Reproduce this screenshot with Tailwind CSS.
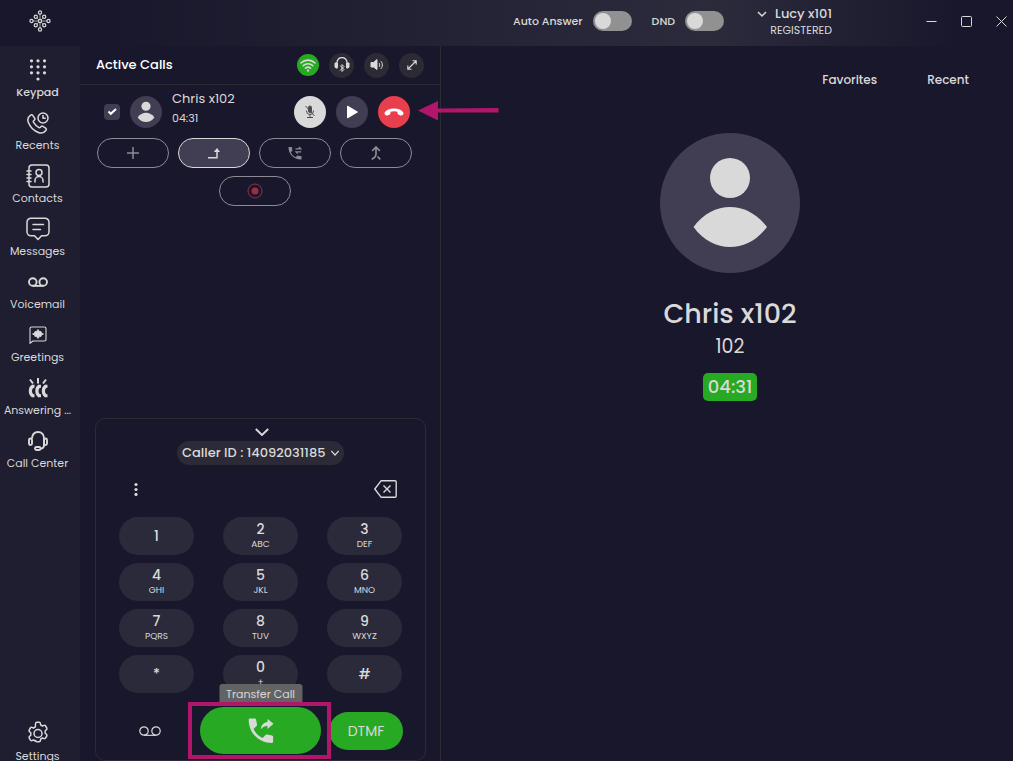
<!DOCTYPE html>
<html lang="en">
<head>
    <meta charset="UTF-8">
    <meta name="viewport" content="width=device-width, initial-scale=1.0">
    <title>Active Calls</title>
    <script src="https://cdn.jsdelivr.net/npm/@tailwindcss/browser@4"></script>
</head>
<body class="h-screen overflow-hidden flex flex-col bg-[#19172b] text-[#d9d9d9] font-['Poppins','Inter',sans-serif]">
    <!-- Title bar -->
    <header class="flex items-center h-[46px] shrink-0 pl-[29px] pr-1.5 pb-1 bg-linear-to-r from-[#19172b] from-10% via-[#2c2b3c] via-70% to-[#19172b] to-95%">
        <svg class="size-[22px]" viewBox="0 0 22 22" fill="none" stroke="currentColor">
            <path stroke-width=".7" d="M11 3v16M3 11h16M7 7l8 8M15 7l-8 8"/>
            <g fill="#19172b" stroke-width="1.2">
                <circle cx="11" cy="2.5" r="1.6"/><circle cx="6.8" cy="6.8" r="1.6"/><circle cx="15.2" cy="6.8" r="1.6"/>
                <circle cx="2.5" cy="11" r="1.6"/><circle cx="11" cy="11" r="1.6"/><circle cx="19.5" cy="11" r="1.6"/>
                <circle cx="6.8" cy="15.2" r="1.6"/><circle cx="15.2" cy="15.2" r="1.6"/><circle cx="11" cy="19.5" r="1.6"/>
            </g>
        </svg>
        <div class="flex items-center ml-auto">
            <label for="auto-answer" class="text-[11px] font-medium mr-2.5">Auto Answer</label>
            <input id="auto-answer" type="checkbox" class="appearance-none w-[39px] h-5 rounded-full bg-[#919191] p-0.5 before:block before:size-4 before:rounded-full before:bg-[#d9d9d9] checked:before:ml-[19px]">
            <label for="dnd" class="text-[11px] font-medium ml-5 mr-2.5">DND</label>
            <input id="dnd" type="checkbox" class="appearance-none w-[39px] h-5 rounded-full bg-[#919191] p-0.5 before:block before:size-4 before:rounded-full before:bg-[#d9d9d9] checked:before:ml-[19px]">
            <button type="button" class="flex flex-col items-end ml-[33px] pt-0.5">
                <span class="flex items-center text-[13px] leading-4 font-medium">
                    <svg class="size-2.5 mr-2" viewBox="0 0 10 10" fill="none" stroke="currentColor" stroke-width="1.5"><path d="M1 3l4 4 4-4"/></svg>
                    Lucy x101
                </span>
                <span class="text-[11px] leading-4">REGISTERED</span>
            </button>
            <div class="flex items-center gap-6 ml-[94px]">
                <button type="button" aria-label="Minimize"><svg class="size-[11px]" viewBox="0 0 11 11" fill="none" stroke="currentColor"><path d="M.5 5.5h10"/></svg></button>
                <button type="button" aria-label="Maximize"><svg class="size-[11px]" viewBox="0 0 11 11" fill="none" stroke="currentColor"><rect x=".5" y=".5" width="10" height="10" rx="1"/></svg></button>
                <button type="button" aria-label="Close"><svg class="size-[11px]" viewBox="0 0 11 11" fill="none" stroke="currentColor"><path d="M.5.5l10 10M10.5.5l-10 10"/></svg></button>
            </div>
        </div>
    </header>

    <div class="flex flex-1 min-h-0">
        <!-- Sidebar -->
        <nav class="flex flex-col gap-[7px] w-20 shrink-0 pt-[9px] pr-[5px] bg-[#1f1d30] text-[11px] leading-[18px] text-center">
            <a href="#keypad" class="flex flex-col items-center font-medium">
                <span class="flex items-center h-7 pt-0.5"><svg class="size-[22px]" viewBox="0 0 22 22" fill="currentColor">
                    <circle cx="4.5" cy="1.8" r="1.6"/><circle cx="11" cy="1.8" r="1.6"/><circle cx="17.5" cy="1.8" r="1.6"/>
                    <circle cx="4.5" cy="7.8" r="1.6"/><circle cx="11" cy="7.8" r="1.6"/><circle cx="17.5" cy="7.8" r="1.6"/>
                    <circle cx="4.5" cy="13.8" r="1.6"/><circle cx="11" cy="13.8" r="1.6"/><circle cx="17.5" cy="13.8" r="1.6"/>
                    <circle cx="11" cy="20" r="1.6"/></svg></span>
                Keypad
            </a>
            <a href="#recents" class="flex flex-col items-center">
                <span class="flex items-center h-7 pt-0.5"><svg class="size-[22px]" viewBox="0 0 22 22" fill="none" stroke="currentColor" stroke-width="1.5" stroke-linejoin="round">
                    <path d="M3.6 3.2C4.2 2.6 5.200 2.700 5.700 3.400L7.700 6.200C8.100 6.800 8 7.500 7.500 8L6.500 9C6.200 9.300 6.200 9.700 6.400 10.100 7.700 12.300 9.700 14.300 12 15.600 12.400 15.800 12.800 15.800 13.100 15.500L14.100 14.500C14.600 14 15.300 13.900 15.900 14.300L18.700 16.200C19.400 16.700 19.500 17.600 19 18.200 17.200 20.800 14.800 21.700 12 20.700 7 19 3 15 1.200 10 .2 7.200 1.200 4.900 3.600 3.200Z"/>
                    <circle cx="16" cy="6" r="5"/><path d="M16 3V6.300H18.800"/></svg></span>
                Recents
            </a>
            <a href="#contacts" class="flex flex-col items-center">
                <span class="flex items-center h-7 pt-0.5"><svg class="size-6" viewBox="0 0 24 24" fill="none" stroke="currentColor" stroke-width="1.5" stroke-linecap="round">
                    <rect x="3" y="1" width="20" height="22" rx="3"/><path d="M1 7h4M1 10.500h4M1 14h4M1 17.500h4"/>
                    <circle cx="13" cy="8.500" r="3"/><path d="M9 18v-1.500a4 4 0 0 1 8 0V18"/></svg></span>
                Contacts
            </a>
            <a href="#messages" class="flex flex-col items-center">
                <span class="flex items-center h-7 pt-0.5"><svg class="size-6" viewBox="0 0 24 24" fill="none" stroke="currentColor" stroke-width="1.5" stroke-linejoin="round" stroke-linecap="round">
                    <path d="M5 1.200h14a4 4 0 0 1 4 4v9.600a4 4 0 0 1-4 4h-3.500L12 22.500 8.500 18.800H5a4 4 0 0 1-4-4V5.200a4 4 0 0 1 4-4ZM7 7.500h10.500M7 12.500h7.500"/></svg></span>
                Messages
            </a>
            <a href="#voicemail" class="flex flex-col items-center">
                <span class="flex items-center h-7 pt-0.5"><svg class="w-5 h-2.5" viewBox="0 0 20 10" fill="none" stroke="currentColor" stroke-width="1.9"><circle cx="4.800" cy="5" r="3.800"/><circle cx="15.200" cy="5" r="3.800"/><path d="M4.800 8.900h10.400"/></svg></span>
                Voicemail
            </a>
            <a href="#greetings" class="flex flex-col items-center">
                <span class="flex items-center h-7 pt-0.5"><svg class="size-[18px]" viewBox="0 0 18 18" fill="none" stroke="currentColor" stroke-width="1.1" stroke-linejoin="round">
                    <path d="M2.500 1h13A1.500 1.500 0 0 1 17 2.500v11a1.500 1.500 0 0 1-1.500 1.500H4L1 17.300V2.500A1.500 1.500 0 0 1 2.500 1Z"/>
                    <path fill="currentColor" stroke-width=".8" d="M3.500 8L5.500 7 6 5.500 7.500 5.500 9 3.500 10.500 5.500 12 5.500 12.500 7 14.500 8 12.500 9 12 10.500 10.500 10.500 9 12.500 7.500 10.500 6 10.500 5.500 9Z"/></svg></span>
                Greetings
            </a>
            <a href="#answering" class="flex flex-col items-center whitespace-nowrap">
                <span class="flex items-center h-7 pt-0.5"><svg class="size-5" viewBox="0 0 20 20" fill="none" stroke="currentColor" stroke-width="2">
                    <path d="M2 1.500l3 4M10 0V5.500M18 1.500l-3 4"/>
                    <path stroke-width="3.200" d="M5 8C1.500 10 1.500 16 5 18.200M11.500 8C8 10 8 16 11.500 18.200M18 8C14.500 10 14.500 16 18 18.200"/>
                    <path stroke-width="3" d="M4 8.300h2.500M4 17.700h2.500M10.500 8.300H13M10.500 17.700H13M17 8.300h2.500M17 17.700h2.500"/></svg></span>
                Answering ...
            </a>
            <a href="#call-center" class="flex flex-col items-center">
                <span class="flex items-center h-7 pt-0.5"><svg class="size-5" viewBox="0 0 20 20" fill="none" stroke="currentColor" stroke-width="1.9">
                    <path d="M4 7.500C4 3.500 6.500 1 10 1s6 2.500 6 6.500V14c0 2-1 3.500-3.500 3.800"/><rect x="1" y="7.500" width="3" height="6.500" rx="1.500"/><rect x="16" y="7.500" width="3" height="6.500" rx="1.500"/><rect x="7" y="16" width="5.500" height="3" rx="1.500"/></svg></span>
                Call Center
            </a>
            <a href="#settings" class="flex flex-col items-center mt-auto -mb-1">
                <span class="flex items-center h-7"><svg class="size-6" viewBox="0 0 24 24" fill="none" stroke="currentColor" stroke-width="1.5" stroke-linejoin="round">
                    <path d="M9.600 2.400C9.700 1.700 10.200 1.300 10.800 1.300h2.400c.6 0 1.100.4 1.200 1.100l.3 1.600 1.800 1 1.600-.6c.6-.2 1.200 0 1.500.6l1.200 2c.3.600.2 1.200-.3 1.600l-1.300 1.100v2.600l1.300 1.100c.5.400.6 1 .3 1.600l-1.200 2c-.3.600-.9.800-1.500.6l-1.600-.6-1.800 1-.3 1.600c-.1.700-.6 1.100-1.200 1.100h-2.400c-.6 0-1.100-.4-1.200-1.100L9.300 20l-1.800-1-1.600.6c-.6.2-1.200 0-1.500-.6l-1.200-2c-.3-.6-.2-1.200.3-1.600l1.300-1.100v-2.600L3.500 10.600c-.5-.4-.6-1-.3-1.600l1.200-2c.3-.6.900-.8 1.500-.6l1.600.6 1.800-1z"/><circle cx="12" cy="12.500" r="4"/></svg></span>
                Settings
            </a>
        </nav>

        <!-- Calls panel -->
        <section class="flex flex-col w-[361px] shrink-0 border-r border-[#2c2b35]">
            <div class="flex items-center gap-2.5 h-[39px] shrink-0 pl-4 pr-4 border-b border-[#2c2b35]">
                <h1 class="text-[13px] font-medium text-white mr-auto">Active Calls</h1>
                <button type="button" aria-label="Connection" class="flex items-center justify-center size-[22px] rounded-full bg-[#28a923]">
                    <svg class="w-4 h-3.5" viewBox="0 0 16 14" fill="none" stroke="currentColor" stroke-width="1.6" stroke-linecap="round"><path d="M1 5a10 10 0 0 1 14 0M3.200 7.700a7 7 0 0 1 9.600 0M5.500 10.200a3.800 3.800 0 0 1 5 0"/><circle cx="8" cy="12.500" r=".4"/></svg>
                </button>
                <button type="button" aria-label="Headset" class="flex items-center justify-center size-[25px] rounded-full bg-[#2c2b35]">
                    <svg class="size-4" viewBox="0 0 16 16" fill="none" stroke="currentColor"><path stroke-width="1.3" d="M3 7V5.500a5 5 0 0 1 10 0V7"/><path fill="currentColor" d="M1 6h2.500v5H1.800L1 10zM15 6h-2.500v5h1.700l.8-1z"/><path d="M6 8.500l4 4-2 2v-7l2 2-4 4"/></svg>
                </button>
                <button type="button" aria-label="Speaker" class="flex items-center justify-center size-[25px] rounded-full bg-[#2c2b35]">
                    <svg class="size-3.5" viewBox="0 0 14 14" fill="none" stroke="currentColor"><path fill="currentColor" d="M1 4.500h2.500L7 1.500v10L3.500 9H1z"/><path d="M9 5c1 1 1 3 0 4M10.500 3c2.500 2 2.500 6 0 8"/></svg>
                </button>
                <button type="button" aria-label="Expand" class="flex items-center justify-center size-[25px] rounded-full bg-[#2c2b35]">
                    <svg class="size-2.5" viewBox="0 0 10 10" fill="none" stroke="currentColor" stroke-width="1.1"><path d="M1 9l8-8M5.500.8h3.700v3.700M.8 5.500v3.700h3.700"/></svg>
                </button>
            </div>

            <div class="relative flex items-center pt-[11px] pl-6 pr-[30px]">
                <span class="relative size-4 mr-2.5">
                    <input type="checkbox" checked aria-label="Select call" class="peer block appearance-none size-4 rounded bg-[#413e53]">
                    <svg class="absolute inset-0 size-4 hidden peer-checked:block pointer-events-none" viewBox="0 0 16 16" fill="none" stroke="#fff" stroke-width="2"><path d="M4.500 7.500l2.300 2.300L12 5"/></svg>
                </span>
                <svg class="size-8 mr-2.5" viewBox="0 0 140 140"><circle cx="70" cy="70" r="70" fill="#413e53"/><circle cx="70" cy="45" r="20" fill="#d9d9d9"/><path fill="#d9d9d9" d="M33.500 94C53 67 87 67 107 94C87 121 53 121 33.500 94Z"/></svg>
                <div class="-mt-2 mr-auto">
                    <p class="text-[13px] leading-5">Chris x102</p>
                    <p class="text-[11px] leading-[18px]">04:31</p>
                </div>
                <div class="flex gap-2.5">
                    <button type="button" aria-label="Mute" class="flex items-center justify-center size-8 rounded-full bg-[#d9d9d9] text-[#4a4a4a]">
                        <svg class="w-3 h-3.5" viewBox="0 0 12 14" fill="none" stroke="currentColor"><rect x="4.500" y="1" width="3" height="6.500" rx="1.500" fill="currentColor"/><path d="M2.500 5.500v.5a3.500 3.500 0 0 0 7 0v-.5M6 9.500V12.500M3 12.500h6M1.500 1l9 10"/></svg>
                    </button>
                    <button type="button" aria-label="Resume" class="flex items-center justify-center size-8 rounded-full bg-[#413e53] text-white">
                        <svg class="size-3.5" viewBox="0 0 14 14" fill="currentColor"><path d="M2 1.500C2 .8 2.600.5 3.200.9L12.500 6.400C13 6.700 13 7.300 12.500 7.600L3.200 13.100C2.600 13.500 2 13.200 2 12.500Z"/></svg>
                    </button>
                    <button type="button" aria-label="Hang up" class="flex items-center justify-center size-8 rounded-full bg-[#e83f4e] text-white">
                        <svg class="w-5 h-2" viewBox="0 0 20 8" fill="currentColor"><path d="M10 .5C5.500.5 2.400 1.700.7 4.600.3 5.300.5 6 1 6.500L1.800 7.200C2.300 7.700 2.900 7.700 3.500 7.500L5.700 6.400C6.300 6.100 6.500 5.700 6.500 5.100V3.800C8.600 3.100 11.400 3.100 13.500 3.800V5.100C13.500 5.700 13.700 6.100 14.300 6.400L16.500 7.500C17.100 7.700 17.700 7.700 18.200 7.200L19 6.500C19.500 6 19.700 5.300 19.300 4.600 17.600 1.700 14.500.5 10 .5Z"/></svg>
                    </button>
                </div>
                <!-- Callout arrow -->
                <svg class="absolute left-[338px] top-4 w-[81px] h-5 text-[#b1166a]" viewBox="0 0 81 20" fill="currentColor"><path d="M0 9.500L20 0v7.500l60.500-.5v4.500H20V19.500z"/></svg>
            </div>

            <div class="flex flex-wrap justify-center gap-x-[9px] gap-y-2 mt-2.5 ml-2.5 mr-[21px]">
                <button type="button" aria-label="Add call" class="flex items-center justify-center w-[72px] h-[30px] rounded-full border border-[#8c8b95] text-[#8c8b95]">
                    <svg class="size-3" viewBox="0 0 12 12" fill="none" stroke="currentColor" stroke-width="1.5"><path d="M6 0v12M0 6h12"/></svg>
                </button>
                <button type="button" aria-label="Transfer" class="flex items-center justify-center w-[72px] h-[30px] rounded-full border border-[#d9d9d9] bg-[#413e53]">
                    <svg class="size-3" viewBox="0 0 12 12" fill="none" stroke="currentColor" stroke-width="1.5"><path d="M0 10.800h9V2"/><path fill="currentColor" stroke="none" d="M5.800 5L9 1l3 4z"/></svg>
                </button>
                <button type="button" aria-label="Attended transfer" class="flex items-center justify-center w-[72px] h-[30px] rounded-full border border-[#8c8b95] text-[#8c8b95]">
                    <svg class="size-3.5" viewBox="0 0 14 14" fill="currentColor"><path d="M.5 1h3.300l.7 3.500L2.700 6.300C3.800 8.600 5.300 10.100 7.700 11.300L9.500 9.500l4 .8v3.200C6 13.800.2 8 .5 1Z"/><path fill="none" stroke="currentColor" stroke-width="1.200" d="M7.500 2.800h5.200L11 .9M13.200 5.800H8l1.700 1.900"/></svg>
                </button>
                <button type="button" aria-label="Merge calls" class="flex items-center justify-center w-[72px] h-[30px] rounded-full border border-[#8c8b95] text-[#8c8b95]">
                    <svg class="w-2.5 h-3.5" viewBox="0 0 10 14" fill="none" stroke="currentColor" stroke-width="1.7"><path d="M1.200 4.800L5 1l3.800 3.800M5 1v7c0 2-1.500 4-4.300 5.300M6.500 10.500L9.300 13.300"/></svg>
                </button>
                <button type="button" aria-label="Record" class="flex items-center justify-center w-[72px] h-[30px] rounded-full border border-[#8c8b95] text-[#9c2e42]">
                    <svg class="size-4" viewBox="0 0 16 16"><circle cx="8" cy="8" r="7" fill="none" stroke="currentColor"/><circle cx="8" cy="8" r="3.500" fill="currentColor"/></svg>
                </button>
            </div>

            <!-- Dial pad -->
            <div class="flex flex-col mt-auto ml-[15px] mr-3.5 px-[23px] pb-1.5 border border-[#2c2b35] rounded-[10px]">
                <button type="button" aria-label="Collapse keypad" class="flex items-end justify-center h-[22px] pl-0.5 pb-[5px]">
                    <svg class="w-3.5 h-2" viewBox="0 0 14 8" fill="none" stroke="currentColor" stroke-width="1.9"><path d="M.8 1L7 7l6.200-6"/></svg>
                </button>
                <div class="relative self-center">
                    <select aria-label="Caller ID" class="block appearance-none h-6 pl-[5px] pr-[18px] rounded-full bg-[#2b2a36] text-[13px] font-medium">
                        <option>Caller ID : 14092031185</option>
                    </select>
                    <svg class="absolute right-[5px] top-2 size-2 pointer-events-none" viewBox="0 0 8 8" fill="none" stroke="currentColor" stroke-width="1.2"><path d="M.3 2L4 6l3.700-4"/></svg>
                </div>
                <div class="flex items-center justify-between h-6 mt-3 pl-[15px] pr-[5px]">
                    <button type="button" aria-label="More"><svg class="w-1 h-3.5" viewBox="0 0 4 14" fill="currentColor"><circle cx="2" cy="2.500" r="1.600"/><circle cx="2" cy="7.500" r="1.600"/><circle cx="2" cy="12.400" r="1.600"/></svg></button>
                    <button type="button" aria-label="Backspace"><svg class="w-[23px] h-[18px]" viewBox="0 0 23 18" fill="none" stroke="currentColor" stroke-width="1.4" stroke-linejoin="round"><path d="M7 .8h14a1.200 1.200 0 0 1 1.200 1.200v14a1.200 1.200 0 0 1-1.200 1.200H7L.8 9z"/><path d="M9.500 5.500l7 7M16.500 5.500l-7 7"/></svg></button>
                </div>

                <div class="grid grid-cols-[repeat(3,75px)] justify-between gap-y-2 mt-4 text-sm leading-4 font-medium">
                    <button type="button" class="h-[38px] rounded-full bg-[#2b2a3b]">1</button>
                    <button type="button" class="h-[38px] rounded-full bg-[#2b2a3b]">2<span class="block text-[9px] leading-[14px] font-normal">ABC</span></button>
                    <button type="button" class="h-[38px] rounded-full bg-[#2b2a3b]">3<span class="block text-[9px] leading-[14px] font-normal">DEF</span></button>
                    <button type="button" class="h-[38px] rounded-full bg-[#2b2a3b]">4<span class="block text-[9px] leading-[14px] font-normal">GHI</span></button>
                    <button type="button" class="h-[38px] rounded-full bg-[#2b2a3b]">5<span class="block text-[9px] leading-[14px] font-normal">JKL</span></button>
                    <button type="button" class="h-[38px] rounded-full bg-[#2b2a3b]">6<span class="block text-[9px] leading-[14px] font-normal">MNO</span></button>
                    <button type="button" class="h-[38px] rounded-full bg-[#2b2a3b]">7<span class="block text-[9px] leading-[14px] font-normal">PQRS</span></button>
                    <button type="button" class="h-[38px] rounded-full bg-[#2b2a3b]">8<span class="block text-[9px] leading-[14px] font-normal">TUV</span></button>
                    <button type="button" class="h-[38px] rounded-full bg-[#2b2a3b]">9<span class="block text-[9px] leading-[14px] font-normal">WXYZ</span></button>
                    <button type="button" class="h-[38px] rounded-full bg-[#2b2a3b]">*</button>
                    <button type="button" class="h-[38px] rounded-full bg-[#2b2a3b]">0<span class="block text-[9px] leading-[14px] font-normal">+</span></button>
                    <button type="button" class="h-[38px] rounded-full bg-[#2b2a3b]">#</button>
                </div>

                <div class="flex items-center mt-3.5">
                    <button type="button" aria-label="Voicemail" class="flex justify-center w-[62px] mr-[19px] shrink-0">
                        <svg class="w-[22px] h-2.5" viewBox="0 0 22 10" fill="none" stroke="currentColor" stroke-width="1.2"><circle cx="5" cy="5" r="4.200"/><circle cx="17" cy="5" r="4.200"/><path d="M5 9.300h12"/></svg>
                    </button>
                    <div class="relative mr-2 shrink-0">
                        <button type="button" aria-label="Transfer Call" class="flex items-center justify-center w-[121px] h-[47px] rounded-full bg-[#28a923]">
                            <svg class="size-[26px]" viewBox="0 0 26 26" fill="currentColor"><path d="M2 .5H6.800c.7 0 1.200.4 1.300 1.100L9 6.500c.1.500 0 1-.4 1.400L5.500 11c2 4 5 7 9 9l3.100-3.100c.4-.4.9-.5 1.400-.4l5 1c.7.1 1.100.6 1.100 1.300v5c0 .7-.5 1.200-1.200 1.200C11 25 .7 15 .7 1.700.7 1 1.300.5 2 .5Z"/><path d="M19.500 1l6 4.800-6 5.200V8c-3-.2-5 1-6.700 3.500.4-4.500 2.700-7 6.700-7.500z"/></svg>
                        </button>
                        <span role="tooltip" class="absolute bottom-[49px] left-1/2 -translate-x-1/2 h-[21px] px-[7px] rounded-t-[3px] bg-[#636363] text-[11px] leading-5 whitespace-nowrap">Transfer Call</span>
                        <!-- Highlight frame -->
                        <span class="absolute -left-3 -right-[10px] -top-[5px] -bottom-[5px] z-10 border-4 border-[#b1166a] pointer-events-none"></span>
                    </div>
                    <button type="button" class="w-[74px] h-[38px] shrink-0 rounded-full bg-[#28a923] text-sm">DTMF</button>
                </div>
            </div>
        </section>

        <!-- Call details -->
        <main class="flex flex-col flex-1 min-w-0 pl-1.5">
            <div class="flex justify-end gap-[50px] pt-6 pr-11 text-xs leading-5 font-medium">
                <a href="#favorites">Favorites</a>
                <a href="#recent">Recent</a>
            </div>
            <div class="flex flex-col items-center mt-[43px]">
                <svg class="size-[140px]" viewBox="0 0 140 140"><circle cx="70" cy="70" r="70" fill="#413e53"/><circle cx="70" cy="45" r="20" fill="#d9d9d9"/><path fill="#d9d9d9" d="M33.500 94C53 67.300 87 67.300 107 94C87 120.700 53 120.700 33.500 94Z"/></svg>
                <h2 class="mt-6 text-[27px] leading-[34px] font-medium">Chris x102</h2>
                <p class="mt-1 text-[19px] leading-6">102</p>
                <p class="mt-3.5 px-[5px] rounded-[5px] bg-[#28a923] text-lg leading-7 font-medium">04:31</p>
            </div>
        </main>
    </div>
</body>
</html>
